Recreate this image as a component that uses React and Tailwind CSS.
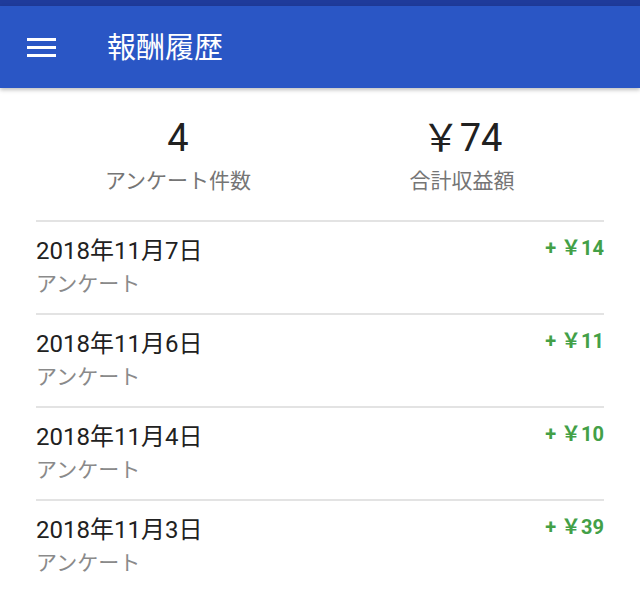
import { useState } from "react";

const rows = [
  { date: "2018年11月7日", amount: "14" },
  { date: "2018年11月6日", amount: "11" },
  { date: "2018年11月4日", amount: "10" },
  { date: "2018年11月3日", amount: "39" },
];

export default function App() {
  const [items] = useState(rows);

  return (
    <div
      className="min-h-screen bg-white"
      style={{ fontFamily: '"Roboto", "Noto Sans CJK JP", sans-serif' }}
    >
      {/* status bar + app bar */}
      <div className="h-[6px] bg-[#1f3b9b]" />
      <header className="h-[82px] bg-[#2a56c5] flex items-center shadow-[0_2px_4px_rgba(0,0,0,0.25)] relative">
        <button className="ml-[27px] w-[30px] flex flex-col gap-[5px] bg-transparent border-0">
          <span className="block h-[3px] w-[29px] bg-white" />
          <span className="block h-[3px] w-[29px] bg-white" />
          <span className="block h-[3px] w-[29px] bg-white" />
        </button>
        <h1 className="ml-[50px] text-[29px] leading-[36px] text-white font-normal mt-[2px]">報酬履歴</h1>
      </header>

      <main className="px-[36px]">
        {/* summary */}
        <div className="grid grid-cols-2 pt-[26px] h-[132px]">
          <div className="flex flex-col items-center">
            <span className="text-[38px] leading-[48px] text-[#212121]">4</span>
            <span className="text-[21px] leading-[30px] text-[#757575] mt-[4px]">アンケート件数</span>
          </div>
          <div className="flex flex-col items-center">
            <span className="text-[38px] leading-[48px] text-[#212121]">￥74</span>
            <span className="text-[21px] leading-[30px] text-[#757575] mt-[4px]">合計収益額</span>
          </div>
        </div>

        {/* history list */}
        <ul>
          {items.map((r) => (
            <li
              key={r.date}
              className="border-t-2 border-[#e3e3e3] h-[93px] flex justify-between pt-[13px]"
            >
              <div className="flex flex-col">
                <span className="text-[24px] leading-[32px] text-[#212121]">{r.date}</span>
                <span className="text-[21px] leading-[34px] text-[#8a8a8a]">アンケート</span>
              </div>
              <span className="text-[20px] leading-[26px] font-bold text-[#43a047]">
                + ￥{r.amount}
              </span>
            </li>
          ))}
        </ul>
      </main>
    </div>
  );
}
